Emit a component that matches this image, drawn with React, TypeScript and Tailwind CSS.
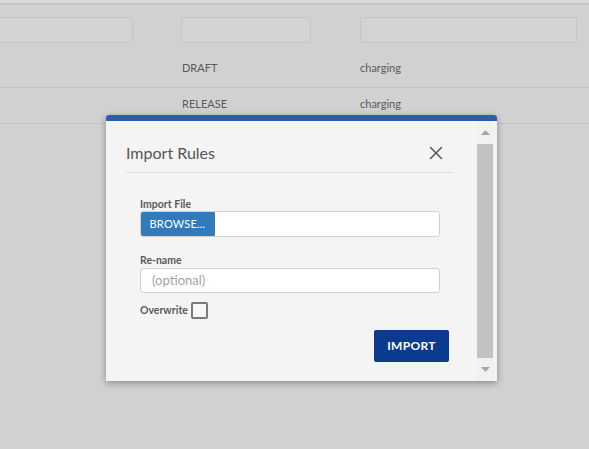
import React from 'react'

const rows = [
  { state: 'DRAFT', type: 'charging' },
  { state: 'RELEASE', type: 'charging' },
]

function FilterBox({ className }: { className: string }) {
  return <div className={`h-[26px] border border-[#c5c5c5] bg-[#d3d3d3] rounded-[2px] ${className}`} />
}

export default function App() {
  return (
    <div className="relative w-[589px] h-[449px] overflow-hidden bg-[#d1d1d1] font-['Lato','Open_Sans',sans-serif] text-[#555]">
      {/* background table (dimmed by overlay) */}
      <div className="h-[3px] bg-[#d9d9d9]" />
      <div className="h-[2px] bg-[#c8c8c8]" />
      <div className="flex items-start pt-[12px] h-[47px]">
        <FilterBox className="w-[134px] -ml-[1px] border-l-0" />
        <FilterBox className="ml-[48px] w-[130px]" />
        <FilterBox className="ml-[49px] w-[217px]" />
      </div>
      {rows.map((r) => (
        <div key={r.state} className="flex items-center h-[36px] pb-[3px] border-b border-[#c4c4c4] text-[11px] text-[#5a5a5a]">
          <span className="ml-[182px] w-[178px]">{r.state}</span>
          <span>{r.type}</span>
        </div>
      ))}

      {/* modal */}
      <div className="absolute left-[106px] top-[115px] w-[391px] h-[266px] flex flex-col bg-[#f4f4f4] rounded-t-[3px] shadow-[0_2px_7px_rgba(0,0,0,0.35)] overflow-hidden">
        <div className="h-[6px] bg-[#2e5ca6] shrink-0" />
        <div className="flex flex-1 min-h-0">
          <div className="flex-1 pl-[20px] pr-[23px]">
            <div className="flex items-center justify-between h-[52px] pt-[12px] border-b border-[#dcdcdc]">
              <h2 className="text-[16px] text-[#555] leading-[20px]">Import Rules</h2>
              <svg width="14" height="14" viewBox="0 0 14 14" className="mr-[10px]">
                <path d="M1.5 1.5 L12.5 12.5 M12.5 1.5 L1.5 12.5" stroke="#5a5a5a" strokeWidth="1.6" strokeLinecap="round" />
              </svg>
            </div>
            <div className="pl-[14px] pr-[13px]">
              <label className="block mt-[24px] text-[10.5px] font-bold leading-[14px] text-[#5b5b5b]">Import File</label>
              <div className="mt-[0px] flex h-[26px] w-[300px] rounded-[3px] border border-[#d2d2d2] bg-white overflow-hidden">
                <button className="w-[75px] -ml-px -my-px h-[26px] rounded-[3px] bg-[#337ab8] text-white text-[11px] tracking-[0.2px]">
                  BROWSE...
                </button>
              </div>
              <label className="block mt-[16px] text-[10.5px] font-bold leading-[14px] text-[#5b5b5b]">Re-name</label>
              <div className="mt-[1px] flex items-center h-[25px] w-[300px] rounded-[3px] border border-[#d2d2d2] bg-white pl-[11px] text-[13px] text-[#a3a3a3]">
                (optional)
              </div>
              <div className="mt-[9px] flex items-center gap-[3px]">
                <span className="text-[10.5px] font-bold text-[#5b5b5b]">Overwrite</span>
                <span className="w-[17px] h-[17px] rounded-[2px] border-2 border-[#7a7a7a] bg-[#f8f8f8]" />
              </div>
              <div className="flex justify-end mt-[11px] -mr-[9px]">
                <button className="w-[75px] h-[32px] rounded-[2px] bg-[#0b3b8e] text-white text-[12px] font-bold tracking-[0.3px]">
                  IMPORT
                </button>
              </div>
            </div>
          </div>
          {/* scrollbar */}
          <div className="w-[18px] mr-[3px] flex flex-col items-center bg-[#f1f1f1]">
            <div className="h-[23px] flex items-center justify-center">
              <svg width="9" height="5" viewBox="0 0 9 5"><path d="M0 5 L4.5 0 L9 5 Z" fill="#a5a5a5" /></svg>
            </div>
            <div className="w-[16px] flex-1 bg-[#c2c2c2]" />
            <div className="h-[23px] flex items-center justify-center">
              <svg width="9" height="5" viewBox="0 0 9 5"><path d="M0 0 L4.5 5 L9 0 Z" fill="#a5a5a5" /></svg>
            </div>
          </div>
        </div>
      </div>
    </div>
  )
}
